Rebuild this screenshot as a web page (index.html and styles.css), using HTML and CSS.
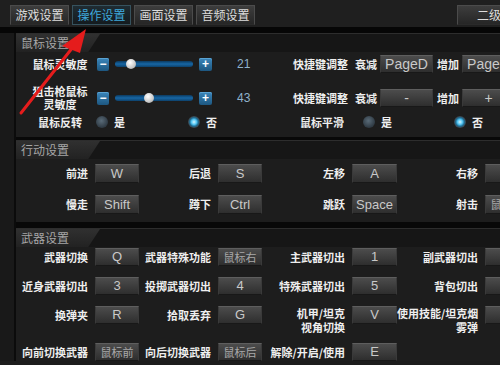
FILE: index.html
```html
<!DOCTYPE html>
<html lang="zh-CN">
<head>
    <meta charset="UTF-8">
    <title>操作设置</title>
    <link rel="stylesheet" href="styles.css">
</head>
<body>
    <div class="tab-bar">
        <div class="tab">游戏设置</div>
        <div class="tab active">操作设置</div>
        <div class="tab">画面设置</div>
        <div class="tab">音频设置</div>
        <div class="tab tab-right">二级设置</div>
    </div>
    <div class="band"></div>

    <div class="main">
        <div class="side"></div>
        <div class="panel">

            <!-- 鼠标设置 -->
            <div class="section mouse">
                <div class="sec-head"><span>鼠标设置</span></div>

                <div class="mrow r1">
                    <div class="mleft">
                        <div class="mlabel">鼠标灵敏度</div>
                        <div class="slider">
                            <span class="sbtn">−</span>
                            <div class="track"><span class="thumb" style="left: 21%"></span></div>
                            <span class="sbtn">+</span>
                        </div>
                        <div class="mval">21</div>
                    </div>
                    <div class="mright">
                        <span class="hk-label">快捷键调整</span>
                        <span class="hk-sub">衰减</span>
                        <span class="key wide">PageD</span>
                        <span class="hk-sub">增加</span>
                        <span class="key wide">PageU</span>
                    </div>
                </div>

                <div class="mrow r2">
                    <div class="mleft">
                        <div class="mlabel two">狙击枪鼠标<br>灵敏度</div>
                        <div class="slider">
                            <span class="sbtn">−</span>
                            <div class="track"><span class="thumb" style="left: 43%"></span></div>
                            <span class="sbtn">+</span>
                        </div>
                        <div class="mval">43</div>
                    </div>
                    <div class="mright">
                        <span class="hk-label">快捷键调整</span>
                        <span class="hk-sub">衰减</span>
                        <span class="key wide">-</span>
                        <span class="hk-sub">增加</span>
                        <span class="key wide">+</span>
                    </div>
                </div>

                <div class="mrow r3">
                    <div class="mleft">
                        <div class="mlabel">鼠标反转</div>
                        <div class="opt first"><span class="radio"></span><span>是</span></div>
                        <div class="opt"><span class="radio on"></span><span>否</span></div>
                    </div>
                    <div class="mright">
                        <span class="hk-label smooth">鼠标平滑</span>
                        <div class="opt first-r"><span class="radio"></span><span>是</span></div>
                        <div class="opt"><span class="radio on"></span><span>否</span></div>
                    </div>
                </div>
            </div>

            <!-- 行动设置 -->
            <div class="section move">
                <div class="sec-head"><span>行动设置</span></div>
                <div class="keys">
                    <div class="klabel">前进</div><div class="key">W</div>
                    <div class="klabel">后退</div><div class="key">S</div>
                    <div class="klabel">左移</div><div class="key">A</div>
                    <div class="klabel">右移</div><div class="key">D</div>

                    <div class="klabel">慢走</div><div class="key">Shift</div>
                    <div class="klabel">蹲下</div><div class="key">Ctrl</div>
                    <div class="klabel">跳跃</div><div class="key">Space</div>
                    <div class="klabel">射击</div><div class="key cn">鼠标左</div>
                </div>
            </div>

            <!-- 武器设置 -->
            <div class="section weapon">
                <div class="sec-head"><span>武器设置</span></div>
                <div class="keys">
                    <div class="klabel">武器切换</div><div class="key">Q</div>
                    <div class="klabel">武器特殊功能</div><div class="key cn">鼠标右</div>
                    <div class="klabel">主武器切出</div><div class="key">1</div>
                    <div class="klabel">副武器切出</div><div class="key">2</div>

                    <div class="klabel">近身武器切出</div><div class="key">3</div>
                    <div class="klabel">投掷武器切出</div><div class="key">4</div>
                    <div class="klabel">特殊武器切出</div><div class="key">5</div>
                    <div class="klabel">背包切出</div><div class="key">B</div>

                    <div class="klabel">换弹夹</div><div class="key">R</div>
                    <div class="klabel">拾取丢弃</div><div class="key">G</div>
                    <div class="klabel two">机甲/坦克<br>视角切换</div><div class="key">V</div>
                    <div class="klabel two">使用技能/坦克烟<br>雾弹</div><div class="key">F</div>

                    <div class="klabel">向前切换武器</div><div class="key cn">鼠标前</div>
                    <div class="klabel">向后切换武器</div><div class="key cn">鼠标后</div>
                    <div class="klabel">解除/开启/使用</div><div class="key">E</div>
                    <div class="klabel"></div><div></div>
                </div>
            </div>

        </div>
    </div>

    <!-- red annotation arrow -->
    <svg class="arrow" width="100" height="120" viewBox="0 0 100 120">
        <line x1="21" y1="113" x2="73" y2="47" stroke="#e51c1c" stroke-width="3" stroke-linecap="round"/>
        <polygon points="86,29 62,46 80,53" fill="#e51c1c"/>
    </svg>
</body>
</html>
```

FILE: styles.css
```css
* {
    box-sizing: border-box;
}

body {
    margin: 0;
    width: 500px;
    height: 365px;
    overflow: hidden;
    background: #1c1c1c;
    font-family: "Noto Sans CJK SC", "Liberation Sans", sans-serif;
    font-size: 11px;
    color: #eeeeee;
    position: relative;
}

/* tabs */
.tab-bar {
    display: flex;
    gap: 3px;
    width: 560px;
    height: 27px;
    padding: 5px 0 0 10px;
    background: #1f1f1f;
}

.tab {
    width: 59px;
    height: 20px;
    flex-shrink: 0;
    border: 1px solid #4b4b4b;
    border-bottom-color: #2a2a2a;
    background: linear-gradient(#3d3d3d, #262626);
    color: #dddddd;
    font-size: 12px;
    line-height: 18px;
    text-align: center;
    white-space: nowrap;
}

.tab.active {
    border-color: #36525e;
    background: linear-gradient(#1f2c33, #141b1f);
    color: #3fa9dc;
}

.tab-right {
    margin-left: 199px;
    width: 70px;
    padding-left: 19px;
    text-align: left;
}

.band {
    height: 6px;
    background: #060606;
}

/* main area */
.main {
    display: flex;
}

.side {
    width: 16px;
    flex-shrink: 0;
    background: #191919;
    border-right: 2px solid #0b0b0b;
}

.panel {
    width: 560px;
    flex-shrink: 0;
    background: #080808;
}

.section {
    background: #1d1d1d;
    border-top: 1px solid #2d2d2d;
}

.sec-head {
    height: 18px;
    background: #161616;
}

.sec-head span {
    display: block;
    width: 84px;
    height: 18px;
    padding-left: 5px;
    background: linear-gradient(#303030, #222222);
    clip-path: polygon(0 0, 100% 0, 86% 100%, 0 100%);
    color: #a6a6a6;
    font-size: 12px;
    line-height: 18px;
}

/* mouse section */
.mouse {
    padding-bottom: 7px;
    margin-bottom: 3px;
}

.mrow {
    display: flex;
    align-items: center;
}

.r1 { height: 20px; margin-top: 2px; }
.r2 { height: 28px; margin-top: 10px; }
.r3 { height: 16px; margin-top: 2px; }

.mleft {
    width: 277px;
    flex-shrink: 0;
    display: flex;
    align-items: center;
}

.mlabel {
    width: 56px;
    margin-left: 16px;
    text-align: center;
    font-weight: bold;
    white-space: nowrap;
}

.mlabel.two {
    line-height: 13px;
}

.slider {
    display: flex;
    align-items: center;
    margin-left: 9px;
}

.sbtn {
    width: 12px;
    height: 13px;
    border-radius: 2px;
    background: linear-gradient(#3b86bb, #1d5780);
    box-shadow: inset 0 1px 0 #5aa3d3;
    color: #ffffff;
    font-family: "Liberation Sans", sans-serif;
    font-weight: bold;
    font-size: 12px;
    line-height: 13px;
    text-align: center;
}

.sbtn:last-child {
    width: 13px;
}

.track {
    position: relative;
    width: 78px;
    height: 6px;
    margin: 0 6px;
    border-radius: 3px;
    background: linear-gradient(#0b3a60, #1766a4 50%, #0d416b);
}

.thumb {
    position: absolute;
    top: -2px;
    width: 10px;
    height: 10px;
    margin-left: -5px;
    border-radius: 50%;
    background: radial-gradient(circle at 40% 35%, #ffffff, #c9c9c9 60%, #8d8d8d);
}

.mval {
    margin-left: 25px;
    font-family: "Liberation Sans", sans-serif;
    font-size: 12px;
    color: #8fb2cc;
}

.mright {
    display: flex;
    align-items: center;
}

.hk-label {
    width: 55px;
    font-weight: bold;
    white-space: nowrap;
}

.hk-label.smooth {
    width: 50px;
    margin-left: 7px;
}

.hk-sub {
    margin-left: 7px;
    font-weight: bold;
    white-space: nowrap;
}

.hk-sub + .key {
    margin-left: 3px;
}

.key.wide + .hk-sub {
    margin-left: 4px;
}

.opt {
    width: 92px;
    display: flex;
    align-items: center;
    font-weight: bold;
}

.opt.first {
    margin-left: 8px;
}

.opt.first-r {
    margin-left: 13px;
    width: 91px;
}

.radio {
    width: 12px;
    height: 12px;
    margin-right: 6px;
    border-radius: 50%;
    background: radial-gradient(circle at 45% 40%, #5a6b78, #34404a 60%, #22282d);
}

.radio.on {
    background: radial-gradient(circle, #d6f6ff 0, #54c6f3 30%, #1f6f96 50%, #3b454d 68%, #262c31 100%);
}

/* key boxes */
.key {
    height: 18px;
    border: 1px solid #3a3a3a;
    border-top-color: #5e5e5e;
    border-bottom-color: #181818;
    background: linear-gradient(#4c4c4c, #2e2e2e);
    color: #c9c9c9;
    font-family: "Liberation Sans", sans-serif;
    font-size: 13px;
    line-height: 16px;
    text-align: center;
}

.key.wide {
    width: 53px;
    font-size: 14px;
}

.key.cn {
    font-family: "Noto Sans CJK SC", sans-serif;
    font-size: 11px;
    color: #a9a9a9;
}

.keys {
    display: grid;
    grid-template-columns: 79px 44px 79px 44px 90px 45px 88px 44px;
}

.klabel {
    padding-right: 7px;
    text-align: right;
    font-weight: bold;
    line-height: 18px;
    white-space: nowrap;
}

.klabel.two {
    line-height: 14px;
}

/* action section */
.move {
    margin-bottom: 6px;
    padding-bottom: 8px;
}

.move .keys {
    margin-top: 5px;
    grid-template-rows: 19px 19px;
    row-gap: 12px;
}

.move .key {
    height: 19px;
    line-height: 17px;
}

/* weapon section */
.weapon .keys {
    margin-top: 1px;
    grid-template-rows: 18px 18px 26px 18px;
    row-gap: 11px;
}

.arrow {
    position: absolute;
    top: 0;
    left: 0;
    pointer-events: none;
}
```
